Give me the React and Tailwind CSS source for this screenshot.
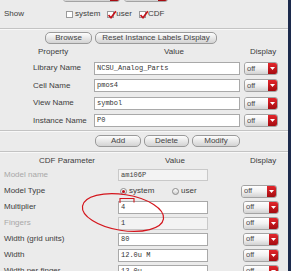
import React from "react";

function Drop({ className = "", label = "off" }) {
  return (
    <div className={`flex h-[13px] shrink-0 overflow-hidden rounded-[3px] border border-[#a3a3a3] ${className}`}>
      <div className="flex flex-1 items-center bg-linear-to-b from-white via-[#f1f1f1] to-[#d2d2d2] pl-[2px] text-[7.5px] leading-none text-[#4a4a4a]">
        {label}
      </div>
      <div className="flex w-[9px] items-center justify-center bg-linear-to-b from-[#e3262c] to-[#a50a10]">
        <svg width="5" height="3" viewBox="0 0 5 3">
          <path d="M0 0H5L2.5 3Z" fill="#fff" />
        </svg>
      </div>
    </div>
  );
}

function Check({ on }) {
  return (
    <span className="relative inline-block h-[7px] w-[7px] shrink-0 border border-[#9a9a9a] bg-white">
      {on && (
        <svg className="absolute -left-[1px] -top-[2px]" width="10" height="10" viewBox="0 0 10 10">
          <path d="M1.5 5.2L4 7.8L8.8 1.2" stroke="#c2121a" strokeWidth="1.7" fill="none" />
        </svg>
      )}
    </span>
  );
}

function Radio({ on }) {
  return (
    <span className="flex h-[7px] w-[7px] shrink-0 items-center justify-center rounded-full border border-[#8c8c8c] bg-linear-to-b from-white to-[#d0d0d0]">
      {on && <span className="h-[3px] w-[3px] rounded-full bg-[#c2121a]" />}
    </span>
  );
}

function Btn({ children, className = "" }) {
  return (
    <div className={`flex h-[12px] items-center justify-center rounded-[5px] border border-[#9a9a9a] bg-linear-to-b from-[#fdfdfd] to-[#d3d3d3] text-[8px] text-[#444] ${className}`}>
      {children}
    </div>
  );
}

export default function App() {
  const rows2 = [
    ["Library Name", "NCSU_Analog_Parts"],
    ["Cell Name", "pmos4"],
    ["View Name", "symbol"],
    ["Instance Name", "P0"],
  ];
  const rows3 = [
    { label: "Multiplier", value: "4" },
    { label: "Fingers", value: "1", dim: true },
    { label: "Width (grid units)", value: "80" },
    { label: "Width", value: "12.0u M" },
    { label: "Width per finger", value: "12.0u" },
  ];

  return (
    <div className="relative h-[271px] w-[291px] overflow-hidden bg-[#ebebeb] font-['Liberation_Sans',Arial,sans-serif] text-[8px] leading-none text-[#3d3d3d]">
      <div className="flex h-full">
        <div className="flex min-w-0 flex-1 flex-col">
          {/* show options */}
          <div className="h-[28px] shrink-0">
            <div className="-mt-[11px] flex h-[14px] gap-[4px] pl-[63px]">
              <Drop className="w-[57px]" label="" />
              <Drop className="w-[44px]" label="" />
            </div>
            <div className="mt-[5px] flex h-[12px] items-center">
              <span className="w-[66px] pl-[4px]">Show</span>
              <Check />
              <span className="ml-[2px] mr-[7px]">system</span>
              <Check on />
              <span className="ml-[2px] mr-[7px]">user</span>
              <Check on />
              <span className="ml-[2px]">CDF</span>
            </div>
          </div>

          {/* instance info */}
          <div className="h-[102px] shrink-0 border-t border-[#c3c3c3] shadow-[inset_0_1px_0_#f8f8f8]">
            <div className="mt-[3px] flex pl-[45px]">
              <Btn className="w-[47px]">Browse</Btn>
              <Btn className="ml-[3px] w-[122px]">Reset Instance Labels Display</Btn>
            </div>
            <div className="mt-[3px] flex h-[10px] items-center">
              <span className="w-[94px] pl-[38px]">Property</span>
              <span className="w-[150px] pl-[70px]">Value</span>
              <span className="pl-[6px]">Display</span>
            </div>
            <div className="mt-[2.5px]">
              {rows2.map(([label, value]) => (
                <div key={label} className="flex h-[17.5px] items-center">
                  <span className="w-[94px] shrink-0 pl-[33px]">{label}</span>
                  <div className="flex h-[13px] w-[146px] shrink-0 items-center border border-[#a9a9a9] bg-white pl-[2px] font-['Liberation_Mono',monospace] text-[7px] text-[#333]">
                    {value}
                  </div>
                  <Drop className="ml-[4px] w-[34px]" />
                </div>
              ))}
            </div>
          </div>

          {/* add / delete / modify */}
          <div className="flex h-[21px] shrink-0 items-center border-t border-[#c3c3c3] pl-[95px] shadow-[inset_0_1px_0_#f8f8f8]">
            <Btn className="w-[46px]">Add</Btn>
            <Btn className="ml-[3px] w-[45px]">Delete</Btn>
            <Btn className="ml-[3px] w-[48px]">Modify</Btn>
          </div>

          {/* CDF parameters */}
          <div className="flex-1 border-t border-[#c3c3c3] shadow-[inset_0_1px_0_#f8f8f8]">
            <div className="mt-[4px] flex h-[10px] items-center">
              <span className="w-[118px] pl-[39px]">CDF Parameter</span>
              <span className="w-[125px] pl-[47px]">Value</span>
              <span className="pl-[7px]">Display</span>
            </div>
            <div className="mt-[1px]">
              <div className="flex h-[16px] items-center">
                <span className="w-[118px] shrink-0 pl-[4px] text-[#a8a8a8]">Model name</span>
                <div className="flex h-[12px] w-[90px] shrink-0 items-center border border-[#c9c9c9] bg-[#f3f3f3] pl-[2px] font-['Liberation_Mono',monospace] text-[7px] text-[#444]">
                  ami06P
                </div>
              </div>
              <div className="flex h-[16px] items-center">
                <span className="w-[118px] shrink-0 pl-[4px]">Model Type</span>
                <span className="ml-[2px] flex w-[52px] items-center gap-[2px]">
                  <Radio on />
                  system
                </span>
                <span className="flex w-[36px] items-center gap-[2px]">
                  <Radio />
                  user
                </span>
                <Drop className="ml-[33px] w-[36px]" />
              </div>
              {rows3.map((r) => (
                <div key={r.label} className="flex h-[16px] items-center">
                  <span className={`w-[118px] shrink-0 pl-[4px] ${r.dim ? "text-[#a8a8a8]" : ""}`}>{r.label}</span>
                  <div
                    className={`flex h-[13px] w-[90px] shrink-0 items-center border pl-[2px] font-['Liberation_Mono',monospace] text-[7px] text-[#333] ${
                      r.dim ? "border-[#c9c9c9] bg-[#f3f3f3]" : "border-[#a9a9a9] bg-white"
                    }`}
                  >
                    {r.value}
                  </div>
                  <Drop className="ml-[35px] w-[36px]" />
                </div>
              ))}
            </div>
          </div>
        </div>
        <div className="w-[3px] shrink-0 bg-[#1c2a4c]" />
      </div>

      {/* hand drawn annotation */}
      <svg className="pointer-events-none absolute inset-0" width="291" height="271" viewBox="0 0 291 271">
        <ellipse cx="123" cy="212.5" rx="41" ry="18" transform="rotate(9 123 212.5)" fill="none" stroke="#d4161d" strokeWidth="1.2" />
        <path d="M120 203V198.5H134V202.5" fill="none" stroke="#d4161d" strokeWidth="1.1" />
      </svg>
    </div>
  );
}
